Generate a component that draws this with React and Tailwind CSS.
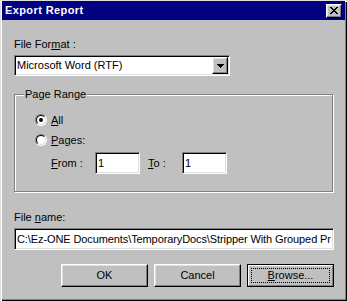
import React from 'react';

const raised =
  'bg-[#c0c0c0] border border-t-white border-l-white border-r-black border-b-black shadow-[inset_-1px_-1px_0_#808080,inset_1px_1px_0_#dfdfdf]';
const sunken =
  'bg-white border border-t-[#808080] border-l-[#808080] border-r-white border-b-white shadow-[inset_1px_1px_0_#000,inset_-1px_-1px_0_#dfdfdf]';

function CloseGlyph() {
  return (
    <svg width="8" height="7" viewBox="0 0 8 7" shapeRendering="crispEdges">
      <path
        fill="#000"
        d="M0 0h2v1H0zM6 0h2v1H6zM1 1h2v1H1zM5 1h2v1H5zM2 2h4v1H2zM3 3h2v1H3zM2 4h4v1H2zM1 5h2v1H1zM5 5h2v1H5zM0 6h2v1H0zM6 6h2v1H6z"
      />
    </svg>
  );
}

function DownArrow() {
  return (
    <svg width="7" height="4" viewBox="0 0 7 4" shapeRendering="crispEdges">
      <path fill="#000" d="M0 0h7v1H0zM1 1h5v1H1zM2 2h3v1H2zM3 3h1v1H3z" />
    </svg>
  );
}

function Radio({ checked, mnemonic, rest }) {
  return (
    <div className="flex items-center h-[12px] gap-[4px]">
      <div className="w-[12px] h-[12px] rounded-full border border-t-[#808080] border-l-[#808080] border-r-white border-b-white">
        <div className="w-full h-full rounded-full border border-t-black border-l-black border-r-[#dfdfdf] border-b-[#dfdfdf] bg-white flex items-center justify-center">
          {checked && <div className="w-[4px] h-[4px] rounded-full bg-black" />}
        </div>
      </div>
      <span>
        <u>{mnemonic}</u>
        {rest}
      </span>
    </div>
  );
}

function TextBox({ value, className }) {
  return (
    <div className={`${sunken} h-[22px] flex items-center pl-[2px] overflow-hidden whitespace-nowrap ${className}`}>
      {value}
    </div>
  );
}

function Button({ children, isDefault }) {
  if (isDefault) {
    return (
      <div className="w-[87px] h-[23px] border border-black">
        <div className="h-full bg-[#c0c0c0] border border-t-white border-l-white border-r-[#808080] border-b-[#808080] p-[2px]">
          <div className="h-full border border-dotted border-black flex items-center justify-center">
            {children}
          </div>
        </div>
      </div>
    );
  }
  return (
    <div className={`${raised} w-[87px] h-[23px] flex items-center justify-center`}>
      {children}
    </div>
  );
}

export default function App() {
  return (
    <div className="w-[347px] h-[301px] bg-[#c0c0c0] shadow-[inset_1px_1px_0_#dfdfdf,inset_2px_2px_0_#fff,inset_-1px_-1px_0_#000,inset_-2px_-2px_0_#808080] pt-[1px] px-[2px] flex flex-col text-[11px] leading-[13px] text-black font-['Liberation_Sans',Arial,sans-serif]">
      {/* title bar */}
      <div className="h-[19px] bg-[#000080] flex items-center justify-between pl-[3px] pr-[3px]">
        <span className="text-white font-bold tracking-[0.4px]">Export Report</span>
        <div className={`${raised} w-[16px] h-[14px] flex items-center justify-center`}>
          <CloseGlyph />
        </div>
      </div>

      <div className="flex flex-col pl-[12px] pr-[11px]">
        <div className="mt-[18px]">
          File For<u>m</u>at :
        </div>

        <div className={`${sunken} mt-[4px] w-[216px] h-[21px] p-[1px] flex`}>
          <div className="flex-1 flex items-center pl-[1px]">Microsoft Word (RTF)</div>
          <div className={`${raised} w-[16px] h-[17px] flex items-center justify-center`}>
            <DownArrow />
          </div>
        </div>

        <fieldset className="mt-[12px] w-[319px] border border-[#808080] shadow-[inset_1px_1px_0_#fff,1px_1px_0_#fff] p-0 m-0">
          <legend className="ml-[9px] px-[1px] bg-[#c0c0c0]">Page Range</legend>
          <div className="pl-[20px] pt-[13px] pb-[17px] flex flex-col">
            <Radio checked mnemonic="A" rest="ll" />
            <div className="mt-[8px]">
              <Radio mnemonic="P" rest="ages:" />
            </div>
            <div className="mt-[6px] pl-[16px] flex items-center h-[22px]">
              <span className="w-[44px]">
                <u>F</u>rom :
              </span>
              <TextBox value="1" className="w-[45px]" />
              <span className="ml-[8px] w-[34px]">
                <u>T</u>o :
              </span>
              <TextBox value="1" className="w-[45px]" />
            </div>
          </div>
        </fieldset>

        <div className="mt-[19px]">
          File <u>n</u>ame:
        </div>
        <TextBox
          value="C:\Ez-ONE Documents\TemporaryDocs\Stripper With Grouped Pr"
          className="mt-[4px] w-full pl-[1px] tracking-[-0.1px]"
        />

        <div className="mt-[14px] flex justify-end gap-[6px]">
          <Button>OK</Button>
          <Button>Cancel</Button>
          <Button isDefault>
            <span>
              <u>B</u>rowse...
            </span>
          </Button>
        </div>
      </div>
    </div>
  );
}
